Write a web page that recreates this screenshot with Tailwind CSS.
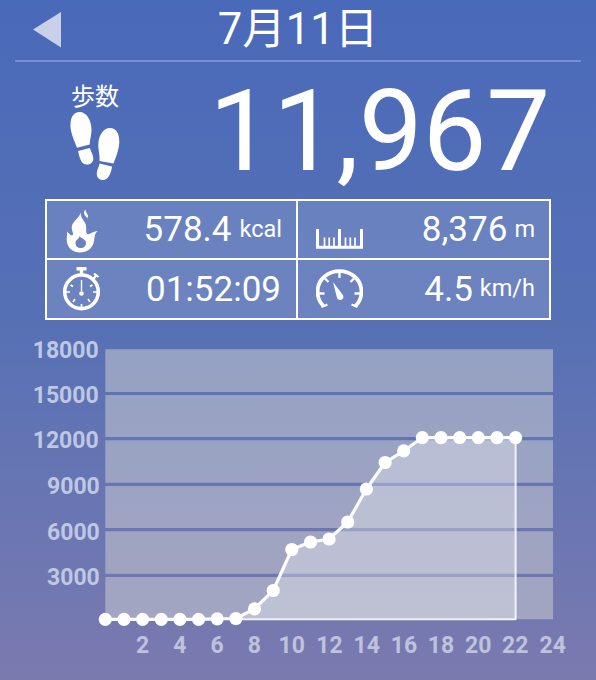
<!DOCTYPE html>
<html lang="ja">
<head>
<meta charset="utf-8">
<title>歩数計</title>
<script src="https://cdn.jsdelivr.net/npm/@tailwindcss/browser@4"></script>
</head>
<body class="w-[596px] h-[680px] overflow-hidden bg-linear-to-b from-[#4969b9] via-[#5871b5] via-50% to-[#7a7aaf] text-white font-[Roboto,'Noto_Sans_CJK_JP',sans-serif]">
<div class="flex flex-col h-full">
  <header class="mx-[15px] h-[62px] border-b-2 border-[#7590d0] grid grid-cols-[60px_1fr_60px] items-center">
    <svg class="w-7 h-9 ml-[18px]" viewBox="0 0 28 36"><path d="M0 17.5 28 0V35.5Z" fill="#c8d1e9"/></svg>
    <h1 class="text-[43.5px] leading-[60px] text-center whitespace-nowrap">7月11日</h1>
  </header>

  <section class="flex justify-between h-[137px] pl-[71px] pr-[46px]">
    <div class="pt-[21px]">
      <div class="text-[24px] leading-[28px]">歩数</div>
      <svg class="w-[50px] h-[70px] -ml-px" viewBox="0 0 50 70" fill="#fff">
        <path d="M7 36.7C2.500 26 0 19 .5 12.500C1 5 4.500 1 9.500 1C16.500 1 21.500 9 21.500 19C21.500 24 20 28 19.700 33.500Z"/>
        <path d="M8 40 19.800 37C21 41 23.500 44 23.300 48C23 51.500 20.500 53.500 17 53.500C10.500 53.500 9.500 45.500 8 40Z"/>
        <path d="M29.500 50C30 43 28 38 28.300 33C28.700 24 33.500 17 40 17C46 17 49.500 22.500 49.300 31C49 39 46 46 43.500 52.500Z"/>
        <path d="M29.500 52.500 42 55.500C41.300 61 39 69 32.500 69C29 69 26.500 66 26.800 62C27 58.500 29 56 29.500 52.500Z"/>
      </svg>
    </div>
    <div class="text-[114px] leading-[138px] tracking-[-0.3px]">11,967</div>
  </section>

  <section class="ml-[45px] w-[506px] h-[121px] grid grid-cols-[249px_251px] grid-rows-[57px_58px] gap-[2px] border-2 border-white text-[35px] leading-none">
    <div class="flex items-center bg-white/13 outline-2 outline-white pr-[14px]">
      <svg class="w-[34px] h-[46px] ml-[19px] mr-auto" viewBox="0 0 34 46" fill="#fff">
        <path fill-rule="evenodd" d="M15 5.500C14 11 18 13 19.500 17C21 21 19.500 24.500 21 27C24 28 26 24.500 31.700 24C28 27 29 30 28 34C27 41 21 45.500 14 45.500C6 45.500 .5 40 .7 32C.7 29 1.500 27 1 24.500C3 26 4 28.500 6 28.500C9 27.500 4.500 23 6 18.500C7.500 14 12 12 15 5.500ZM13.300 29C14 32 9.500 32 9.500 36.200C9.500 39.300 11.800 41 14.700 41C17.800 41 20 39 20 36C20 32.500 16 31.500 13.300 29Z"/>
        <path d="M19.700 2.500C16.500 5.500 18 8 21.500 11C24 8 19 6 19.700 2.500Z"/>
      </svg>
      <span>578.4</span><span class="text-[23.5px] ml-[8px]">kcal</span>
    </div>
    <div class="flex items-center bg-white/13 outline-2 outline-white pr-[14px]">
      <svg class="w-[47px] h-[20px] ml-[18px] mr-auto mt-[18px]" viewBox="0 0 47 20" fill="none" stroke="#fff">
        <path d="M1.500 0V18.200H45.500V0" stroke-width="3"/><path d="M23.500 0V18" stroke-width="3"/>
        <path d="M8.500 8.500V18M13.200 8.500V18M18 8.500V18M29.500 8.500V18M34.300 8.500V18M39 8.500V18" stroke-width="1.700"/>
      </svg>
      <span>8,376</span><span class="text-[23.5px] ml-[7px]">m</span>
    </div>
    <div class="flex items-center bg-white/13 outline-2 outline-white pr-[15px]">
      <svg class="w-[39px] h-[44px] ml-[15px] mr-auto" viewBox="0 0 39 44" fill="none" stroke="#fff">
        <circle cx="19.500" cy="24.800" r="16.800" stroke-width="3.600"/>
        <path d="M14.500 1.800H24.500M19.500 2V8" stroke-width="3.400"/>
        <path d="M31 12.500 34 8.500M32 6.500 36.500 10" stroke-width="2.200"/>
        <path d="M19.500 13V24" stroke-width="1.400"/><circle cx="19.500" cy="26.500" r="2.300" fill="#fff" stroke="none"/>
        <path d="M19.500 37V41M4 25H8M31 25H35M8.500 18 11 19.500M30.500 18 28 19.500M11 35 13 32M28 35 26 32" stroke-width="1.700"/>
      </svg>
      <span>01:52:09</span>
    </div>
    <div class="flex items-center bg-white/13 outline-2 outline-white pr-[14px]">
      <svg class="w-[47px] h-[40px] ml-[18px] mr-auto" viewBox="0 0 47 40" fill="none" stroke="#fff">
        <path d="M7.500 37C-1.500 28 .5 14 8.500 7.500C17 .2 30 .2 38.500 7.500C46.500 14 48.500 28 39.500 37" stroke-width="3.800"/>
        <path d="M23.500 2V9M3 24.500H8.500M38.500 24.500H44M8.500 9 12.500 13M38.500 9 34.500 13M5.500 38 11.500 35.500M41.500 38 35.500 35.500" stroke-width="2.300"/>
        <path d="M17 13 26.500 25.500A3.300 3.300 0 1 1 20.800 28Z" fill="#fff" stroke="none"/>
      </svg>
      <span>4.5</span><span class="text-[23.5px] ml-[7px]">km/h</span>
    </div>
  </section>

  <svg class="w-[596px] h-[360px]" viewBox="0 320 596 360">
    <g fill="#d2d2d2" fill-opacity=".5">
      <path d="M105.300 349.200H553V392H105.300ZM105.300 395H553V437H105.300ZM105.300 440.200H553V482.800H105.300ZM105.300 486H553V528H105.300ZM105.300 531.200H553V573.800H105.300ZM105.300 577H553V619.200H105.300Z"/>
    </g>
    <path d="M236 618.500 254.500 608.800 273.200 590.500 291.800 549.500 310.500 542 329 539 347.700 522 366.400 489 385 462.500 403.700 450.800 422.300 437.700H515.600V619Z" fill="#fff" fill-opacity=".3"/>
    <path d="M515.600 438V619.200H236" fill="none" stroke="#f0f3fb" stroke-width="2" stroke-linejoin="round"/>
    <polyline id="line" fill="none" stroke="#fafcff" stroke-width="3.200" stroke-linejoin="round" points="105.300,619.300 124,619.300 142.600,619.300 161.300,619.300 179.900,619.300 198.600,619.300 217.200,618.800 235.900,618.500 254.500,608.800 273.200,590.500 291.800,549.500 310.500,542 329.100,539 347.700,522 366.400,489 385.100,462.500 403.700,450.800 422.300,437.700 441,437.700 459.700,437.700 478.300,437.700 497,437.700 515.600,437.700"/>
    <g id="dots" fill="#fff"></g>
    <g fill="#bfc8e1" font-size="23" font-weight="700" text-anchor="end">
      <text x="98.700" y="357.700">18000</text><text x="98.700" y="403">15000</text><text x="98.700" y="448.300">12000</text>
      <text x="99.800" y="494">9000</text><text x="99.800" y="539.500">6000</text><text x="99.800" y="585">3000</text>
    </g>
    <g fill="#bfc2dc" font-size="23" font-weight="700" text-anchor="middle">
      <text x="142.600" y="653">2</text><text x="179.900" y="653">4</text><text x="217.200" y="653">6</text><text x="254.300" y="653">8</text>
      <text x="291.800" y="653">10</text><text x="329.500" y="653">12</text><text x="366.800" y="653">14</text><text x="404" y="653">16</text>
      <text x="441" y="653">18</text><text x="478.300" y="653">20</text><text x="515.200" y="653">22</text><text x="552.800" y="653">24</text>
    </g>
  </svg>
</div>
<script>
  const dots = document.getElementById('dots');
  for (const p of document.getElementById('line').points) {
    const c = document.createElementNS('http://www.w3.org/2000/svg', 'circle');
    c.setAttribute('cx', p.x); c.setAttribute('cy', p.y); c.setAttribute('r', 6.6);
    dots.append(c);
  }
</script>
</body>
</html>
